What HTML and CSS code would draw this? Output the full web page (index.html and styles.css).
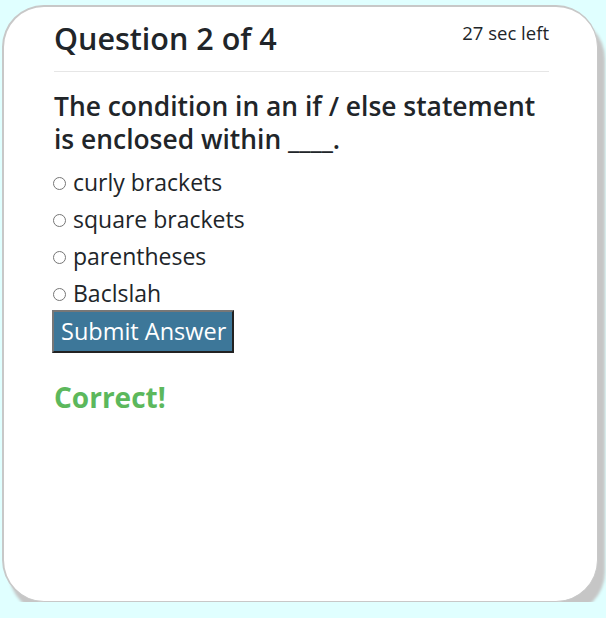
FILE: index.html
```html
<!DOCTYPE html>
<html>
<head>
<meta charset="utf-8">
<link rel="stylesheet" href="styles.css">
</head>
<body>
<div class="card">
  <div class="header">
    <h1 class="title">Question 2 of 4</h1>
    <span class="timer">27 sec left</span>
  </div>
  <div class="question">The condition in an if / else statement is enclosed within ____.</div>
  <ul class="options">
    <li class="option"><span class="radio"></span>curly brackets</li>
    <li class="option"><span class="radio"></span>square brackets</li>
    <li class="option"><span class="radio"></span>parentheses</li>
    <li class="option"><span class="radio"></span>Baclslah</li>
  </ul>
  <button class="submit">Submit Answer</button>
  <div class="result">Correct!</div>
</div>
</body>
</html>
```

FILE: styles.css
```css
html, body {
  margin: 0;
  padding: 0;
}
body {
  background: #e0ffff;
  font-family: "Open Sans", "Noto Sans", sans-serif;
  color: #212529;
}
.card {
  box-sizing: border-box;
  margin: 5px 8px 0 2px;
  height: 597px;
  background: #fff;
  border: 1px solid #c8c8c8;
  border-left-width: 2px;
  border-top-width: 2px;
  border-radius: 42px;
  box-shadow: 7px 12px 3px #c6c6c6;
  padding: 11px 48px 0 50px;
}
.header {
  display: flex;
  justify-content: space-between;
  align-items: flex-start;
  border-bottom: 1px solid #e6e6e6;
  padding-bottom: 13px;
}
.title {
  margin: 0;
  font-size: 30.5px;
  font-weight: 600;
  line-height: 40px;
}
.timer {
  font-size: 18.5px;
  line-height: 26px;
  margin-top: 2px;
}
.question {
  margin-top: 18px;
  font-size: 26.4px;
  font-weight: 600;
  line-height: 33px;
}
.options {
  list-style: none;
  margin: 8px 0 0 0;
  padding: 0;
}
.option {
  display: flex;
  align-items: center;
  font-size: 23px;
  line-height: 37px;
  height: 37px;
}
.radio {
  box-sizing: border-box;
  width: 13px;
  height: 13px;
  border: 1px solid #767676;
  border-radius: 50%;
  margin: 2px 7px 0 -1px;
}
.submit {
  display: block;
  margin-top: -2px;
  margin-left: -2px;
  background: #3d7799;
  color: #fff;
  font-family: inherit;
  font-size: 23.5px;
  line-height: 31px;
  padding: 4px 6px 4px 7px;
  border: 2px solid;
  border-color: #777 #222 #222 #777;
}
.result {
  margin-top: 26px;
  color: #5cb85c;
  font-size: 28px;
  font-weight: 700;
  line-height: 36px;
}
```
